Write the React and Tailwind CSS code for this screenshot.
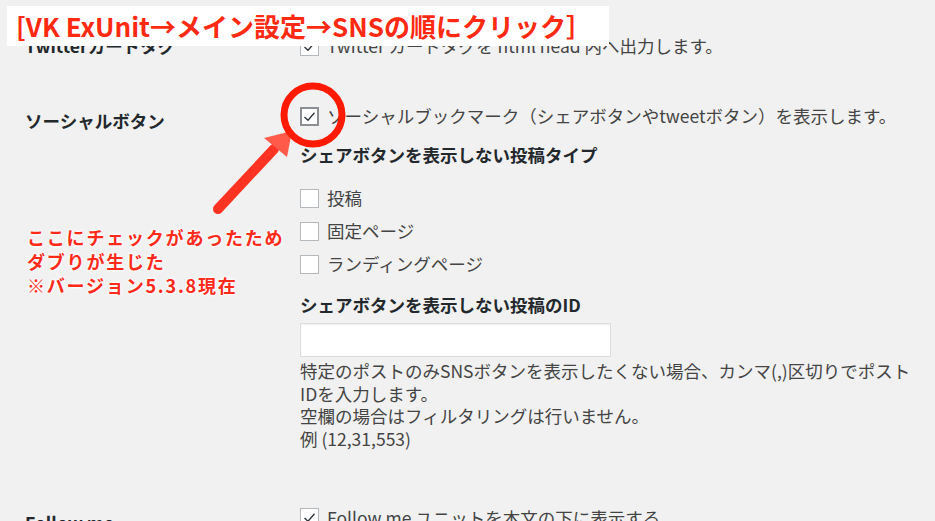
const font = { fontFamily: '"Noto Sans CJK JP", "Noto Sans", sans-serif' };

function Check({ checked, strong }) {
  return (
    <span
      className={`inline-flex h-[19px] w-[19px] shrink-0 items-center justify-center bg-white ${
        strong ? 'border-2 border-[#8c8f94]' : 'border border-[#b4b9be]'
      }`}
    >
      {checked && (
        <svg width="13" height="11" viewBox="0 0 13 11">
          <path d="M1.5 6 L5 9.3 L11.5 1.8" fill="none" stroke="#2c3338" strokeWidth="1.3" />
        </svg>
      )}
    </span>
  );
}

function CheckLine({ checked, strong, children }) {
  return (
    <div className="flex h-[22px] items-center gap-[8px] whitespace-nowrap">
      <Check checked={checked} strong={strong} />
      <span>{children}</span>
    </div>
  );
}

function Row({ label, children, className = '' }) {
  return (
    <div className={`flex ${className}`}>
      <div className="w-[300px] shrink-0 pl-[25px] pt-[5px] font-bold leading-[22px] text-[#23282d]">{label}</div>
      <div className="flex-1">{children}</div>
    </div>
  );
}

export default function App() {
  return (
    <div
      className="relative h-[521px] w-[935px] overflow-hidden bg-[#f1f1f1] text-[17.5px] leading-[22px] text-[#444]"
      style={font}
    >
      <div className="pt-[35px]">
        <Row label="Twitterカードタグ" className="[&>div:first-child]:pt-0">
          <CheckLine checked>Twitter カードタグを html head 内へ出力します。</CheckLine>
        </Row>

        <Row label="ソーシャルボタン" className="mt-[48px]">
          <CheckLine checked strong>
            ソーシャルブックマーク（シェアボタンやtweetボタン）を表示します。
          </CheckLine>
          <div className="mt-[17px] font-bold text-[#23282d]">シェアボタンを表示しない投稿タイプ</div>
          <div className="mt-[21px] flex flex-col gap-[11px]">
            <CheckLine>投稿</CheckLine>
            <CheckLine>固定ページ</CheckLine>
            <CheckLine>ランディングページ</CheckLine>
          </div>
          <div className="mt-[19px] font-bold text-[#23282d]">シェアボタンを表示しない投稿のID</div>
          <input
            type="text"
            className="mt-[7px] block h-[34px] w-[311px] border border-[#dddddd] bg-white px-2 shadow-[inset_0_1px_2px_rgba(0,0,0,0.07)] outline-none"
          />
          <div className="mt-[3px] leading-[22.7px]">
            <div>特定のポストのみSNSボタンを表示したくない場合、カンマ(,)区切りでポスト</div>
            <div>IDを入力します。</div>
            <div>空欄の場合はフィルタリングは行いません。</div>
            <div>例 (12,31,553)</div>
          </div>
        </Row>

        <Row label="Follow me" className="mt-[56px]">
          <CheckLine checked>Follow me ユニットを本文の下に表示する</CheckLine>
        </Row>
      </div>

      {/* annotation banner */}
      <div className="absolute left-[7px] top-[6px] flex h-[40px] w-[602px] items-center bg-white pl-[9px] text-[26px] font-bold leading-none text-[#ff2a12]">
        [VK ExUnit→メイン設定→SNSの順にクリック］
      </div>

      {/* annotation note */}
      <div className="absolute left-[27px] top-[225px] text-[18px] font-bold leading-[24px] tracking-[1.8px] text-[#ff2a1a] [text-shadow:0_0_3px_#fff,0_0_3px_#fff,0_0_4px_#fff]">
        <div>ここにチェックがあったため</div>
        <div>ダブりが生じた</div>
        <div>※バージョン5.3.8現在</div>
      </div>

      {/* circle + arrow */}
      <svg className="pointer-events-none absolute left-0 top-0" width="935" height="521" viewBox="0 0 935 521">
        <path d="M218 209 L274 149" stroke="#ff3322" strokeWidth="10" strokeLinecap="round" fill="none" />
        <polygon points="264,138 292,131 287,157" fill="#ff5a4a" />
        <circle cx="313" cy="115" r="29" fill="none" stroke="#ff1a00" strokeWidth="7" />
      </svg>
    </div>
  );
}
